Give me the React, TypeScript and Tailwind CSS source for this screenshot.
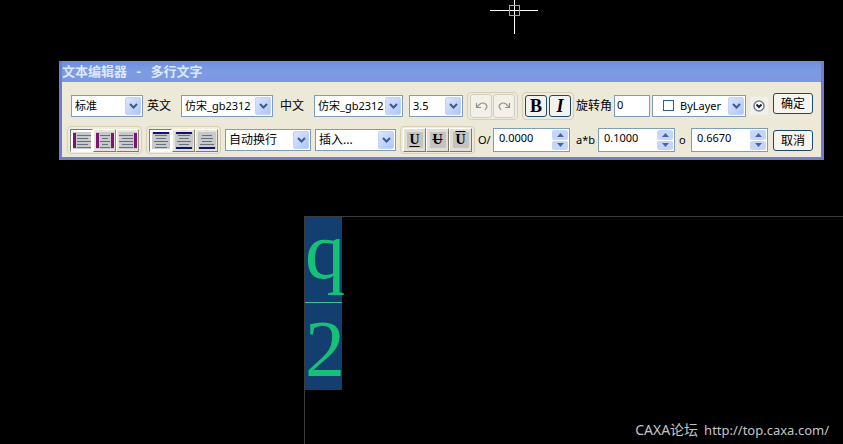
import React, { useState } from "react";

type SelectProps = {
  label: string;
  options: string[];
  className: string;
  swatch?: boolean;
};

function Select({ label, options, className, swatch }: SelectProps) {
  return (
    <div className={`relative shrink-0 h-[22px] ${className}`}>
      <select
        aria-label={label}
        className={`appearance-none block w-full h-full bg-white border border-[#7f9db9] pr-4 outline-none ${
          swatch ? "pl-[27px]" : "pl-[3px]"
        }`}
      >
        {options.map((option) => (
          <option key={option}>{option}</option>
        ))}
      </select>
      {swatch && (
        <span className="absolute left-[11px] top-[5px] w-[11px] h-[11px] border border-[#2f5f9b] pointer-events-none" />
      )}
      <span className="absolute right-[2px] top-[2px] bottom-[2px] w-4 flex items-center justify-center rounded-xs bg-linear-to-br from-[#dbe6fe] to-[#aec5f8] border border-[#c3d3fb] pointer-events-none">
        <svg viewBox="0 0 9 6" className="w-[9px] h-[6px]" fill="none">
          <path d="M1 1L4.5 4.5L8 1" stroke="#3f5a8c" strokeWidth="2" />
        </svg>
      </span>
    </div>
  );
}

function Spinner({ label, initial }: { label: string; initial: string }) {
  const [value, setValue] = useState(initial);

  const step = (delta: number) =>
    setValue((prev) => (Number(prev) + delta).toFixed(4));

  return (
    <div className="flex shrink-0 w-[77px] h-6 bg-white border border-[#7f9db9] p-px">
      <input
        type="text"
        aria-label={label}
        value={value}
        onChange={(event) => setValue(event.target.value)}
        className="min-w-0 flex-1 pl-1 pb-1 outline-none"
      />
      <div className="flex flex-col w-4 gap-px">
        <button
          type="button"
          aria-label={`${label} +`}
          onClick={() => step(0.1)}
          className="flex-1 flex items-center justify-center rounded-xs bg-[#c6d6fa]"
        >
          <svg viewBox="0 0 7 4" className="w-[7px] h-1">
            <path d="M0 4 L3.5 0 L7 4Z" fill="#4a66a0" />
          </svg>
        </button>
        <button
          type="button"
          aria-label={`${label} -`}
          onClick={() => step(-0.1)}
          className="flex-1 flex items-center justify-center rounded-xs bg-[#c6d6fa]"
        >
          <svg viewBox="0 0 7 4" className="w-[7px] h-1">
            <path d="M0 0 L3.5 4 L7 0Z" fill="#4a66a0" />
          </svg>
        </button>
      </div>
    </div>
  );
}

function Group({ children }: { children: React.ReactNode }) {
  return (
    <div className="flex shrink-0 items-center h-7 px-[2px] rounded-[4px] border border-[#d3cfb9] bg-[#efecdf]">
      {children}
    </div>
  );
}

// bars: [x, y, width, height] of the coloured guides around the text lines
type AlignIcon = {
  label: string;
  color: string;
  bars: number[][];
  lines: number[][];
};

const horizontal: AlignIcon[] = [
  {
    label: "左对齐",
    color: "#7d1474",
    bars: [[0, 1, 3, 15]],
    lines: [[4, 14], [4, 11], [4, 14], [4, 11], [4, 14]],
  },
  {
    label: "居中",
    color: "#7d1474",
    bars: [[0, 1, 3, 15], [15, 1, 3, 15]],
    lines: [[4, 10], [6, 6], [4, 10], [6, 6], [4, 10]],
  },
  {
    label: "右对齐",
    color: "#7d1474",
    bars: [[15, 1, 3, 15]],
    lines: [[0, 14], [3, 11], [0, 14], [3, 11], [0, 14]],
  },
];

const vertical: AlignIcon[] = [
  {
    label: "顶端",
    color: "#10107c",
    bars: [[1, 0, 16, 2]],
    lines: [[3, 12], [4, 10], [2, 14], [4, 10], [3, 12]],
  },
  {
    label: "中间",
    color: "#10107c",
    bars: [[1, 0, 16, 2], [1, 15, 16, 2]],
    lines: [[3, 12], [4, 10], [2, 14], [4, 10]],
  },
  {
    label: "底端",
    color: "#10107c",
    bars: [[1, 15, 16, 2]],
    lines: [[4, 10], [3, 12], [4, 10], [2, 14]],
  },
];

function AlignGroup({ icons }: { icons: AlignIcon[] }) {
  const [active, setActive] = useState(0);

  return (
    <Group>
      {icons.map(({ label, color, bars, lines }, index) => (
        <button
          key={label}
          type="button"
          aria-label={label}
          onClick={() => setActive(index)}
          className={`flex items-center justify-center w-[23px] h-[23px] border ${
            index === active
              ? "bg-white border-t-[#7d7a6c] border-l-[#7d7a6c] border-b-white border-r-white"
              : "bg-[#e9e5d6] border-t-white border-l-white border-b-[#7d7a6c] border-r-[#8d897a]"
          }`}
        >
          <svg viewBox="0 0 18 17" className="w-[18px] h-[17px]">
            <rect width="18" height="17" fill="#c9c9cb" />
            {lines.map(([x, width], row) => (
              <rect
                key={row}
                x={x}
                y={3 + row * 3}
                width={width}
                height="1"
                fill="#5f7478"
              />
            ))}
            {bars.map(([x, y, width, height]) => (
              <rect
                key={`${x}-${y}`}
                x={x}
                y={y}
                width={width}
                height={height}
                fill={color}
              />
            ))}
          </svg>
        </button>
      ))}
    </Group>
  );
}

function HistoryButton({ label, flip }: { label: string; flip?: boolean }) {
  return (
    <button
      type="button"
      aria-label={label}
      className="flex items-center justify-center w-[22px] h-6 rounded-[3px] border border-[#d0cdbd] bg-[#f3f1e7]"
    >
      <svg viewBox="0 0 13 11" className="w-[13px] h-[11px]" fill="none">
        <path
          d={
            flip
              ? "M11.5 2v4.5H7M11.5 6.5L8 3Q5 1 2.500 3T2 7.500l1 1.500"
              : "M1.500 2v4.500H6M1.500 6.500L5 3Q8 1 10.500 3T11 7.500l-1 1.500"
          }
          stroke="#8b938f"
          strokeWidth="1.2"
        />
      </svg>
    </button>
  );
}

const lineStyles = [
  { label: "下划线", style: "underline underline-offset-2" },
  { label: "删除线", style: "line-through" },
  { label: "上划线", style: "overline" },
];

const fonts = ["仿宋_gb2312", "宋体", "黑体"];

function Editor() {
  return (
    <section className="ml-[59px] mr-[19px] border-x-[3px] border-b-[3px] border-[#6f7ccf] bg-[#ece9d8]">
      <h1 className="h-[21px] leading-[24px] bg-linear-to-b from-[#6c8fdf] via-[#7d9be4] to-[#7b97e0] text-[#dbe7fc] text-[13px] font-bold font-['Liberation_Mono','Noto_Sans_CJK_SC',monospace]">
        文本编辑器 - 多行文字
      </h1>
      <form
        className="flex justify-between pt-[10px] pl-[5px] pr-2 pb-[3px]"
        onSubmit={(event) => event.preventDefault()}
      >
        <div className="flex flex-col shrink-0 gap-[6px]">
          <div className="flex items-center h-7 pl-1">
            <Select label="样式" options={["标准"]} className="w-[72px]" />
            <span className="w-[38px] pl-1 text-xs">英文</span>
            <Select label="英文" options={fonts} className="w-[92px]" />
            <span className="w-[41px] pl-[7px] text-xs">中文</span>
            <Select label="中文" options={fonts} className="w-[89px]" />
            <div className="flex items-center gap-1 pl-[6px]">
              <Select
                label="字高"
                options={["3.5", "5", "7"]}
                className="w-[54px]"
              />
              <Group>
                <div className="flex gap-px">
                  <HistoryButton label="撤销" />
                  <HistoryButton label="重做" flip />
                </div>
              </Group>
              <Group>
                <div className="flex gap-[2px] text-lg leading-4 font-bold font-['Liberation_Serif',serif]">
                  <button
                    type="button"
                    className="w-[22px] h-[22px] rounded-[3px] border border-[#1c4a6e] bg-[#f3f2ec]"
                  >
                    B
                  </button>
                  <button
                    type="button"
                    className="w-[22px] h-[22px] rounded-[3px] border border-[#1c4a6e] bg-[#f3f2ec] italic"
                  >
                    I
                  </button>
                </div>
              </Group>
            </div>
            <label htmlFor="angle" className="w-10 pl-[2px] text-xs">
              旋转角
            </label>
            <input
              id="angle"
              type="text"
              defaultValue="0"
              className="w-9 h-[22px] pl-[2px] pb-[3px] mr-[2px] bg-white border border-[#7f9db9] outline-none"
            />
            <Select
              label="颜色"
              options={["ByLayer", "ByBlock"]}
              className="w-[94px]"
              swatch
            />
            <button
              type="button"
              aria-label="更多"
              className="flex items-center justify-center w-[18px] h-[18px] ml-1 bg-[#f0efe9]"
            >
              <svg viewBox="0 0 12 12" className="w-3 h-3" fill="none">
                <circle cx="6" cy="6" r="5" fill="#fff" stroke="#717f98" strokeWidth="1.5" />
                <path d="M3.500 4.500L6 7L8.500 4.500" stroke="#222" strokeWidth="2" />
              </svg>
            </button>
          </div>
          <div className="flex items-center h-7">
            <div className="flex items-center gap-1">
              <AlignGroup icons={horizontal} />
              <AlignGroup icons={vertical} />
              <Select
                label="换行"
                options={["自动换行", "压缩文字"]}
                className="w-[86px] text-xs"
              />
              <Select
                label="插入"
                options={["插入..."]}
                className="w-[81px] text-xs"
              />
              <Group>
                {lineStyles.map(({ label, style }) => (
                  <button
                    key={label}
                    type="button"
                    aria-label={label}
                    className="flex items-center justify-center w-[23px] h-6 border border-t-white border-l-white border-b-[#7d7a6c] border-r-[#7d7a6c] bg-[#e2dfd2]"
                  >
                    <span
                      className={`w-4 h-4 bg-[#c3c3c3] text-sm leading-4 font-bold font-['Liberation_Serif',serif] ${style}`}
                    >
                      U
                    </span>
                  </button>
                ))}
              </Group>
            </div>
            <span className="w-[18px] pl-[3px]">O/</span>
            <Spinner label="倾斜角" initial="0.0000" />
            <span className="w-7 pl-[6px]">a*b</span>
            <Spinner label="字间距" initial="0.1000" />
            <span className="w-4 pl-1">o</span>
            <Spinner label="宽度系数" initial="0.6670" />
          </div>
        </div>
        <div className="flex flex-col shrink-0 gap-4 pt-px">
          <button
            type="submit"
            className="w-10 h-[21px] rounded-[3px] border border-[#1c4a6e] bg-[#f6f5f0] text-xs"
          >
            确定
          </button>
          <button
            type="button"
            className="w-10 h-[21px] rounded-[3px] border border-[#1c4a6e] bg-[#f6f5f0] text-xs"
          >
            取消
          </button>
        </div>
      </form>
    </section>
  );
}

function App() {
  return (
    <div className="flex flex-col min-h-screen overflow-hidden bg-black text-black text-[11px] leading-4 font-['Noto_Sans','Noto_Sans_CJK_SC',sans-serif]">
      <div className="h-[61px] pl-[490px]">
        <svg viewBox="0 0 48 34" className="w-12 h-[34px]" fill="none">
          <path d="M0 10.500H48M24.500 0V34" stroke="#fff" />
          <rect x="19.500" y="5.500" width="10" height="10" stroke="#5fd096" />
        </svg>
      </div>
      <Editor />
      <main className="relative flex-1 mt-14 ml-[304px] border-t border-l border-[#3c3c3c]">
        <div className="flex flex-col w-[37px] bg-[#123f70] text-[#17c077] text-[80px] font-['Liberation_Serif',serif]">
          <span className="h-[86px] leading-[68px] border-b border-[#3fc08f]">
            q
          </span>
          <span className="h-[87px] leading-[92px]">2</span>
        </div>
        <a
          href="http://top.caxa.com/"
          className="absolute right-[14px] bottom-1 flex gap-[6px] text-[#c4c4c4] text-[13px] leading-5"
        >
          <span className="text-sm leading-5">CAXA论坛</span>
          <span>http://top.caxa.com/</span>
        </a>
      </main>
    </div>
  );
}

export default App;
